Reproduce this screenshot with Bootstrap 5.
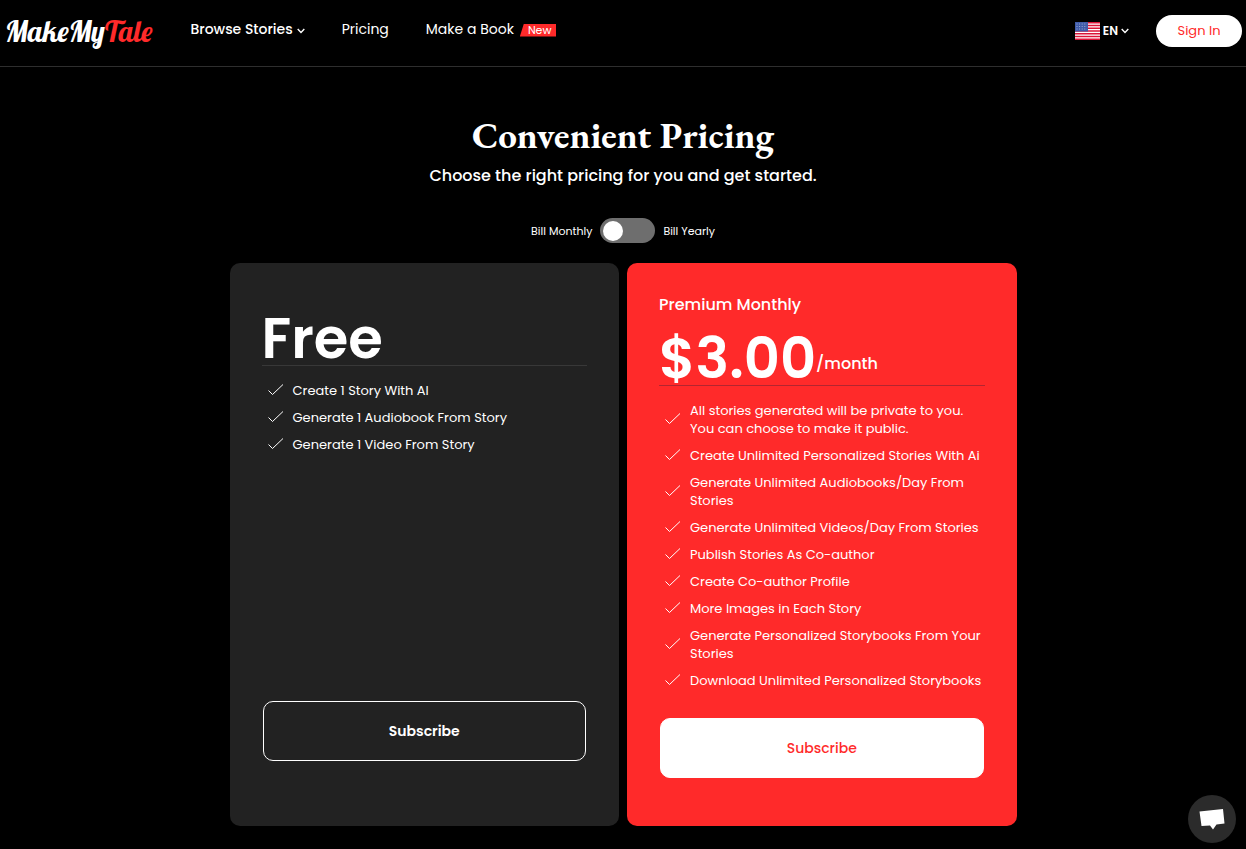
<!DOCTYPE html>
<html lang="en">
<head>
<meta charset="utf-8">
<meta name="viewport" content="width=device-width, initial-scale=1">
<title>MakeMyTale – Pricing</title>
<link href="https://cdn.jsdelivr.net/npm/bootstrap@5.3.0/dist/css/bootstrap.min.css" rel="stylesheet">
<style>
:root { --brand: #ff2a2a; --panel: #222; }
body { background: #000; color: #fff; font-family: Poppins, Inter, sans-serif; font-size: 13px; line-height: 18px; }
.site-header { height: 67px; border-bottom: 1px solid #2e2e2e; padding: 0 4px 4px 5px; }
.brand-name { font: 400 29px/36px Lobster, "Liberation Serif", serif; color: #fff; margin-right: 38px; }
.brand-name span { color: var(--brand); }
.main-nav { gap: 37px; font-size: 14px; line-height: 20px; padding-bottom: 4px; }
.main-nav a, .lang-btn { color: #fff; text-decoration: none; }
.main-nav .current { font-weight: 500; }
.new-tag { background: var(--brand); font-size: 11px; line-height: 13px; padding: 0 5px 0 8px; margin: 2px 0 0 6px; clip-path: polygon(4px 0, 100% 0, 100% 100%, 0 100%); }
.lang-btn { gap: 3px; font-size: 12px; margin-right: 27px; }
.signin-btn { --bs-btn-font-size: 13px; --bs-btn-line-height: 18px; --bs-btn-padding-y: 6px; width: 86px; color: var(--brand); background: #fff; }
.signin-btn:hover { color: #fff; background: var(--brand); }
.pricing { max-width: 787px; padding-top: 43px; }
.page-title { font: 700 37px/50px "EB Garamond", "Liberation Serif", serif; }
.page-lead { font-size: 16px; line-height: 24px; margin-bottom: 30px; padding-top: 4px; }
.billing { gap: 8px; font-size: 11px; margin-bottom: 20px; }
.bill-toggle { appearance: none; width: 55px; height: 25px; border-radius: 13px; background: #6e6e6e; padding: 0 3px; margin: 0; display: flex; align-items: center; cursor: pointer; }
.bill-toggle::before { content: ""; width: 20px; height: 20px; border-radius: 50%; background: #fff; }
.bill-toggle:checked { background: var(--brand); justify-content: flex-end; }
.plan { border-radius: 10px; padding: 29px 32px 48px; min-height: 563px; }
.plan-free { background: var(--panel); padding-top: 46px; padding-bottom: 65px; }
.plan-premium { background: var(--brand); }
.plan-name { font-size: 16px; line-height: 26px; margin: 0; font-weight: 500; }
.plan-price { font-size: 56px; line-height: 52px; padding-top: 4px; font-weight: 600; margin: 0; border-bottom: 1px solid #383838; }
.plan-premium .plan-price { border-color: #b32530; margin-top: 11px; }
.plan-price small { font-size: 16px; line-height: 24px; font-weight: 500; padding-top: 10px; }
.features { padding: 16px 0 0 6px; gap: 9px; margin-bottom: 28px; }
.features li { display: flex; align-items: center; gap: 9px; }
.features svg { flex: none; }
.plan-btn { --bs-btn-font-size: 14px; --bs-btn-line-height: 20px; --bs-btn-font-weight: 600; --bs-btn-padding-y: 19px; --bs-btn-border-radius: 10px; --bs-btn-hover-color: #fff; color: #fff; border-color: #fff; margin: 0 1px; }
.plan-premium .plan-btn { background: #fff; color: var(--brand); font-weight: 500; --bs-btn-hover-color: var(--brand); }
.chat-btn { position: fixed; right: 10px; bottom: 6px; width: 48px; height: 48px; background: #2b2b2b; }
</style>
</head>
<body>
<svg class="d-none" aria-hidden="true">
  <symbol id="check" viewBox="0 0 16 14"><path d="M.5 6.500 4.500 10.500 15 .5" fill="none" stroke="currentColor" stroke-width="1"/></symbol>
  <symbol id="chevron" viewBox="0 0 8 6"><path d="M.7 1 4 4.400 7.300 1" fill="none" stroke="currentColor" stroke-width="1.4"/></symbol>
</svg>
<header class="site-header d-flex align-items-center">
  <a class="brand-name text-decoration-none" href="#">MakeMy<span>Tale</span></a>
  <nav class="main-nav d-flex align-items-center" aria-label="Main">
    <a class="current d-flex align-items-center" href="#">Browse Stories <svg class="ms-1 mt-1" width="8" height="6"><use href="#chevron"/></svg></a>
    <a href="#">Pricing</a>
    <a class="d-flex align-items-center" href="#">Make a Book <span class="new-tag">New</span></a>
  </nav>
  <div class="d-flex align-items-center ms-auto">
    <button type="button" class="lang-btn btn p-0 border-0 d-flex align-items-center">
      <svg width="25" height="18" viewBox="0 0 25 18" aria-hidden="true"><path fill="#fff" d="M0 0h25v18H0z"/><path stroke="#dc1438" stroke-width="1.4" d="M0 .7h25M0 3.450h25M0 6.200h25M0 8.950h25M0 11.700h25M0 14.450h25M0 17.200h25"/><path fill="#3f5ba9" d="M0 0h13v9.500H0z"/><path stroke="#9cacd5" stroke-dasharray="1 1.600" d="M1.500 2h10.500M1.500 4.500h10.500M1.500 7h10.500"/></svg>
      <span class="fw-semibold">EN</span>
      <svg width="8" height="6"><use href="#chevron"/></svg>
    </button>
    <button type="button" class="signin-btn btn rounded-pill">Sign In</button>
  </div>
</header>
<main class="pricing container-fluid px-0">
  <div class="text-center">
    <h1 class="page-title mb-0">Convenient Pricing</h1>
    <p class="page-lead fw-medium">Choose the right pricing for you and get started.</p>
  </div>
  <div class="billing d-flex justify-content-center align-items-center">
    <label for="billing">Bill Monthly</label>
    <input class="bill-toggle" type="checkbox" role="switch" id="billing">
    <label for="billing">Bill Yearly</label>
  </div>
  <div class="row row-cols-1 row-cols-md-2 g-2 mt-0">
    <div class="col mt-0">
      <section class="plan plan-free d-flex flex-column h-100">
        <h2 class="plan-price">Free</h2>
        <ul class="features list-unstyled d-flex flex-column">
          <li><svg width="16" height="14"><use href="#check"/></svg>Create 1 Story With AI</li>
          <li><svg width="16" height="14"><use href="#check"/></svg>Generate 1 Audiobook From Story</li>
          <li><svg width="16" height="14"><use href="#check"/></svg>Generate 1 Video From Story</li>
        </ul>
        <button type="button" class="plan-btn btn mt-auto">Subscribe</button>
      </section>
    </div>
    <div class="col mt-0">
      <section class="plan plan-premium d-flex flex-column h-100">
        <h2 class="plan-name">Premium Monthly</h2>
        <p class="plan-price d-flex align-items-center">$3.00<small>/month</small></p>
        <ul class="features list-unstyled d-flex flex-column">
          <li><svg width="16" height="14"><use href="#check"/></svg><span>All stories generated will be private to you.<br>You can choose to make it public.</span></li>
          <li><svg width="16" height="14"><use href="#check"/></svg>Create Unlimited Personalized Stories With Ai</li>
          <li><svg width="16" height="14"><use href="#check"/></svg><span>Generate Unlimited Audiobooks/Day From<br>Stories</span></li>
          <li><svg width="16" height="14"><use href="#check"/></svg>Generate Unlimited Videos/Day From Stories</li>
          <li><svg width="16" height="14"><use href="#check"/></svg>Publish Stories As Co-author</li>
          <li><svg width="16" height="14"><use href="#check"/></svg>Create Co-author Profile</li>
          <li><svg width="16" height="14"><use href="#check"/></svg>More Images in Each Story</li>
          <li><svg width="16" height="14"><use href="#check"/></svg><span>Generate Personalized Storybooks From Your<br>Stories</span></li>
          <li><svg width="16" height="14"><use href="#check"/></svg>Download Unlimited Personalized Storybooks</li>
        </ul>
        <button type="button" class="plan-btn btn mt-auto">Subscribe</button>
      </section>
    </div>
  </div>
</main>
<button type="button" class="chat-btn btn rounded-circle border-0 p-0 d-flex align-items-center justify-content-center" aria-label="Open chat">
  <svg width="26" height="22" viewBox="0 0 26 22"><path fill="#fff" d="M.5 3.500 24 1 25.500 15.500 17.500 16.500 14 21.500 11 17.500 2.500 18z"/></svg>
</button>
<script src="https://cdn.jsdelivr.net/npm/bootstrap@5.3.0/dist/js/bootstrap.bundle.min.js"></script>
</body>
</html>
